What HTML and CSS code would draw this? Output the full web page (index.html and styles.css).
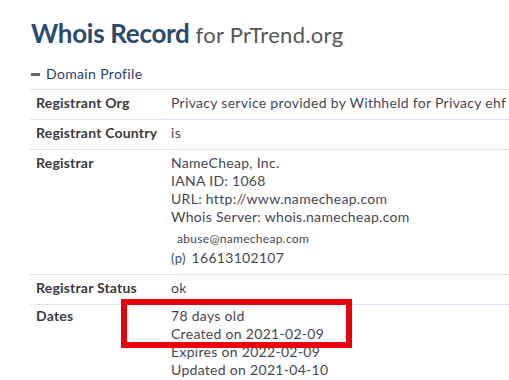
FILE: index.html
```html
<!DOCTYPE html>
<html>
<head>
<meta charset="utf-8">
<link rel="stylesheet" href="styles.css">
</head>
<body>
<div class="page">
  <h1 class="title">Whois Record <small class="for">for PrTrend.org</small></h1>
  <div class="section-head"><span class="dash"></span>Domain Profile</div>
  <table class="profile">
    <tr>
      <th>Registrant Org</th>
      <td>Privacy service provided by Withheld for Privacy ehf</td>
    </tr>
    <tr>
      <th>Registrant Country</th>
      <td>is</td>
    </tr>
    <tr>
      <th>Registrar</th>
      <td>
        <div class="lines">NameCheap, Inc.<br>IANA ID: 1068<br>URL: http://www.namecheap.com<br>Whois Server: whois.namecheap.com</div>
        <div class="contact">
          <div class="email">abuse@namecheap.com</div>
          <div class="phone"><span class="p">(p)</span> 16613102107</div>
        </div>
      </td>
    </tr>
    <tr>
      <th>Registrar Status</th>
      <td>ok</td>
    </tr>
    <tr class="dates">
      <th>Dates</th>
      <td>78 days old<br>Created on 2021-02-09<br>Expires on 2022-02-09<br>Updated on 2021-04-10</td>
    </tr>
  </table>
</div>
<div class="highlight"></div>
</body>
</html>
```
FILE: styles.css
```css
html, body {
  margin: 0;
  padding: 0;
  background: #fff;
  overflow: hidden;
}
body {
  font-family: Lato, "Open Sans", sans-serif;
  color: #444;
  position: relative;
  width: 509px;
  height: 380px;
}
.page {
  padding: 0 0 0 31px;
}
.title {
  margin: 0;
  padding-top: 15px;
  font-size: 26px;
  line-height: 36px;
  font-weight: 700;
  color: #2c4a6e;
  letter-spacing: -0.3px;
}
.for {
  font-size: 22px;
  font-weight: 400;
  color: #555;
  letter-spacing: 0.3px;
}
.section-head {
  margin-top: 12px;
  display: flex;
  align-items: center;
  font-size: 14px;
  line-height: 18px;
  letter-spacing: 0.35px;
  color: #2a3d68;
  padding-bottom: 6px;
  border-bottom: 1px dotted #c8c8f0;
}
.dash {
  display: inline-block;
  width: 9px;
  height: 3px;
  background: #666;
  margin-right: 6px;
}
.profile {
  border-collapse: collapse;
  width: 478px;
  font-size: 14px;
  line-height: 18px;
  letter-spacing: 0.3px;
}
.profile th, .profile td {
  text-align: left;
  vertical-align: top;
  padding: 4px 0 7px 5px;
  border-bottom: 1px dotted #c8c8f0;
}
.profile th {
  width: 130px;
  font-weight: 700;
  color: #3a3a3a;
  letter-spacing: 0.2px;
}
.profile td {
  color: #474752;
  white-space: nowrap;
}
.contact {
  margin-top: 4px;
}
.email {
  font-size: 12px;
  letter-spacing: 0.3px;
  padding-left: 6px;
  line-height: 18px;
}
.phone {
  margin-top: 1px;
  line-height: 18px;
}
.p {
  font-size: 13px;
  color: #3a4a70;
  margin-right: 2px;
}
.dates th, .dates td {
  border-bottom: none;
  padding-top: 2px;
}
.highlight {
  position: absolute;
  left: 121px;
  top: 299px;
  width: 219px;
  height: 37px;
  border: 6px solid #e8000a;
}
```
